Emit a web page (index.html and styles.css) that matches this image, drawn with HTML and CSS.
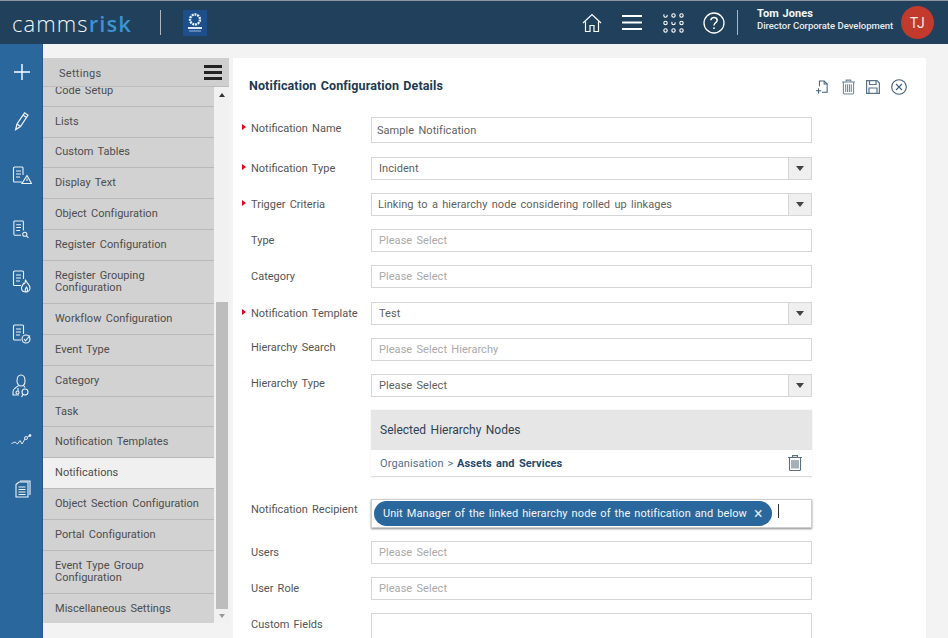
FILE: index.html
```html
<!DOCTYPE html>
<html lang="en">
<head>
<meta charset="utf-8">
<title>Notification Configuration Details</title>
<link rel="stylesheet" href="styles.css">
</head>
<body>
<div class="app">
  <header class="topbar">
    <div class="brand"><span class="brand-a">camms</span><span class="brand-b">risk</span></div>
    <span class="vline brand-line"></span>
    <div class="org-logo">
      <svg width="24" height="26" viewBox="0 0 24 26"><rect width="24" height="26" fill="#1c4f8c"/><circle cx="12" cy="9.5" r="5" fill="none" stroke="#e8f0f8" stroke-width="2.4" stroke-dasharray="2 .8"/><rect x="5" y="17" width="14" height="2" fill="#dfe9f4"/><rect x="6" y="20.5" width="12" height="1" fill="#9db8d6"/></svg>
    </div>
    <div class="top-spacer"></div>
    <nav class="top-icons">
      <svg class="ti-home" width="20" height="20" viewBox="0 0 20 20" fill="none" stroke="#fff" stroke-width="1.2"><path d="M1 10 10 1.5 19 10"/><path d="M3.5 8.5V18.5H8V12.5H12V18.5H16.5V8.5"/></svg>
      <svg class="ti-menu" width="20" height="15" viewBox="0 0 20 15" fill="#fff"><rect width="20" height="2"/><rect y="6.5" width="20" height="2"/><rect y="13" width="20" height="2"/></svg>
      <svg class="ti-grid" width="21" height="20" viewBox="0 0 21 20" fill="none" stroke="#fff" stroke-width="1.1"><circle cx="2.5" cy="2.5" r="1.7" stroke-dasharray="6 3"/><circle cx="10.5" cy="2.5" r="1.7"/><circle cx="18.5" cy="2.5" r="1.7"/><circle cx="2.5" cy="10" r="1.7"/><circle cx="10.5" cy="10" r="1.7" stroke-dasharray="6 3"/><circle cx="18.5" cy="10" r="1.7"/><circle cx="2.5" cy="17.5" r="1.7"/><circle cx="10.5" cy="17.5" r="1.7"/><circle cx="18.5" cy="17.5" r="1.7"/></svg>
      <svg class="ti-help" width="22" height="22" viewBox="0 0 22 22" fill="none" stroke="#fff" stroke-width="1.3"><circle cx="11" cy="11" r="10"/><path d="M7.8 8.3C8 6.3 9.4 5.4 11 5.4c1.8 0 3.2 1.2 3.2 2.8 0 2.4-3.2 2.6-3.2 5.2" stroke-width="1.5"/><circle cx="11" cy="16.2" r=".9" fill="#fff" stroke="none"/></svg>
    </nav>
    <span class="vline user-line"></span>
    <div class="user">
      <div class="user-name">Tom Jones</div>
      <div class="user-role">Director Corporate Development</div>
    </div>
    <div class="avatar">TJ</div>
  </header>

  <div class="workspace">
    <aside class="rail">
      <svg class="r-plus" width="16" height="16" viewBox="0 0 16 16" stroke="#fff" stroke-width="1.4"><path d="M8 0V16M0 8H16"/></svg>
      <svg class="r-pen" width="16" height="20" viewBox="0 0 16 20" fill="none" stroke="#eef3f8" stroke-width="1.2"><path d="M4 13 11.5 1.8 15 4.2 7.5 15.5 2.6 18.6Z"/><path d="M4 13 7.5 15.5M10 4 13.5 6.4"/></svg>
      <svg class="r-doc" width="20" height="19" viewBox="0 0 20 19" fill="none" stroke="#eef3f8" stroke-width="1.1"><path d="M10 16H2.500A1 1 0 0 1 1.500 15V2A1 1 0 0 1 2.500 1H10A1 1 0 0 1 11 2V9"/><path d="M4 5H9M4 8H9M4 11H8"/><path d="M15 9.500 19.500 17.500H10Z"/><path d="M15 12.500V15"/></svg>
      <svg class="r-doc" width="18" height="19" viewBox="0 0 18 20" fill="none" stroke="#eef3f8" stroke-width="1.1"><path d="M9 16H2.500A1 1 0 0 1 1.500 15V2A1 1 0 0 1 2.500 1H10.500A1 1 0 0 1 11.500 2V11"/><path d="M4 5H9M4 8H9M4 11H8"/><circle cx="13" cy="15" r="2.200"/><path d="M14.800 16.800 16.800 18.800"/></svg>
      <svg class="r-doc" width="19" height="23" viewBox="0 0 19 23" fill="none" stroke="#eef3f8" stroke-width="1.1"><path d="M9 15.500H2.500A1 1 0 0 1 1.500 14.500V2A1 1 0 0 1 2.500 1H10.500A1 1 0 0 1 11.500 2V9"/><path d="M4 5H9M4 8H9M4 11H8"/><path d="M13.500 9.500C14 13 18 14 18 18 18 20.500 16 22 14 22 11.500 22 9.500 20.500 9.500 18 9.500 16 11 15 11.500 13.500 12.500 14.500 13.500 12.500 13.500 9.500Z"/><path d="M13.500 22C12.500 20 13.500 18.500 14.500 17 15.500 18.500 16 20.500 14.500 22"/></svg>
      <svg class="r-doc" width="19" height="20" viewBox="0 0 19 20" fill="none" stroke="#eef3f8" stroke-width="1.1"><path d="M9 16H2.500A1 1 0 0 1 1.500 15V2A1 1 0 0 1 2.500 1H10.500A1 1 0 0 1 11.500 2V10"/><path d="M4 5H9M4 8H9M4 11H8"/><circle cx="14" cy="15" r="4"/><path d="M12 15 13.500 16.800 18 11.500"/></svg>
      <svg class="r-doc" width="18" height="24" viewBox="0 0 18 24" fill="none" stroke="#eef3f8" stroke-width="1.1"><path d="M5 7C5 3 6.500 1 9 1S13 3 13 7 11 12 9 12 5 10 5 7Z"/><path d="M6.500 11.500C5.500 13 1 14 1 18V21H7"/><path d="M11.500 11.500 13 13.500"/><path d="M6 14V17"/><circle cx="5.500" cy="18.500" r="1.500"/><circle cx="13" cy="18" r="3"/><path d="M11 20.500 9.500 23"/></svg>
      <svg class="r-trend" width="21" height="12" viewBox="0 0 20 12" fill="none" stroke="#eef3f8" stroke-width=".9"><path d="M0 9.500 3.500 8 6 10 8.500 6.500 10.500 10 13.500 5"/><circle cx="14.500" cy="4" r="1.500"/><circle cx="18.500" cy="1.500" r="1" fill="#eef3f8"/><path d="M15.800 3.200 17.500 2"/></svg>
      <svg class="r-pages" width="16" height="18" viewBox="0 0 16 18" fill="none" stroke="#eef3f8" stroke-width="1.1"><path d="M5 1H15V15"/><path d="M1 4.500 4 2H13V17H1Z"/><path d="M3.500 7H10.500M3.500 9.500H10.500M3.500 12H10.500M3.500 14.500H10.500"/></svg>
    </aside>

    <section class="settings">
      <div class="settings-head">
        <span class="settings-title">Settings</span>
        <svg width="18" height="15" viewBox="0 0 18 15" fill="#222"><rect width="18" height="3"/><rect y="6" width="18" height="3"/><rect y="12" width="18" height="3"/></svg>
      </div>
      <div class="settings-body">
        <ul class="settings-list">
          <li class="item first">Code Setup</li>
          <li class="item">Lists</li>
          <li class="item">Custom Tables</li>
          <li class="item">Display Text</li>
          <li class="item">Object Configuration</li>
          <li class="item">Register Configuration</li>
          <li class="item double">Register Grouping Configuration</li>
          <li class="item">Workflow Configuration</li>
          <li class="item">Event Type</li>
          <li class="item">Category</li>
          <li class="item">Task</li>
          <li class="item">Notification Templates</li>
          <li class="item active">Notifications</li>
          <li class="item">Object Section Configuration</li>
          <li class="item">Portal Configuration</li>
          <li class="item double">Event Type Group Configuration</li>
          <li class="item">Miscellaneous Settings</li>
        </ul>
        <div class="scrollbar">
          <span class="arrow-up"></span>
          <span class="thumb"></span>
          <span class="arrow-down"></span>
        </div>
      </div>
    </section>

    <main class="panel">
      <div class="panel-head">
        <h1>Notification Configuration Details</h1>
        <div class="actions">
          <svg class="act-file" width="12" height="14" viewBox="0 0 14 16" fill="none" stroke="#3f5f7c" stroke-width="1.200"><path d="M4 7V1H9.500L13 4.500V14H7"/><path d="M9.500 1V4.500H13"/><path d="M0 12.500H6M3 9.500V15.500"/></svg>
          <svg width="13" height="16" viewBox="0 0 14 16" fill="none" stroke="#6d8599" stroke-width="1.100"><path d="M0 2.500H14M4.500 2.500V.6H9.500V2.500"/><path d="M1.500 2.500V14.500A1 1 0 0 0 2.500 15.500H11.500A1 1 0 0 0 12.500 14.500V2.500"/><path d="M4 5V13.500M6 5V13.500M8 5V13.500M10 5V13.500"/></svg>
          <svg width="14" height="14" viewBox="0 0 14 14" fill="none" stroke="#58748c" stroke-width="1.200"><path d="M.6.6H11L13.400 3V13.400H.6Z"/><path d="M3.500.6V4.500H10V.6"/><path d="M3 13.400V8H11V13.400"/></svg>
          <svg width="16" height="16" viewBox="0 0 16 16" fill="none" stroke="#3f5f7c" stroke-width="1.100"><circle cx="8" cy="8" r="7.300"/><path d="M5 5 11 11M11 5 5 11"/></svg>
        </div>
      </div>

      <form class="form">
        <div class="row r-first">
          <label class="req">Notification Name</label>
          <div class="control text-value">Sample Notification</div>
        </div>
        <div class="row">
          <label class="req">Notification Type</label>
          <div class="control select">Incident<span class="caret"></span></div>
        </div>
        <div class="row">
          <label class="req">Trigger Criteria</label>
          <div class="control select criteria">Linking to a hierarchy node considering rolled up linkages<span class="caret"></span></div>
        </div>
        <div class="row">
          <label>Type</label>
          <div class="control placeholder">Please Select</div>
        </div>
        <div class="row r-gap">
          <label>Category</label>
          <div class="control placeholder">Please Select</div>
        </div>
        <div class="row">
          <label class="req">Notification Template</label>
          <div class="control select">Test<span class="caret"></span></div>
        </div>
        <div class="row r-up">
          <label>Hierarchy Search</label>
          <div class="control placeholder">Please Select Hierarchy</div>
        </div>
        <div class="row r-up">
          <label>Hierarchy Type</label>
          <div class="control select">Please Select<span class="caret"></span></div>
        </div>
        <div class="nodes">
          <div class="nodes-head">Selected Hierarchy Nodes</div>
          <div class="nodes-row">
            <span class="crumb">Organisation &gt; <b>Assets and Services</b></span>
            <svg width="14" height="16" viewBox="0 0 14 16" fill="none" stroke="#5d6f7e" stroke-width="1.100"><path d="M0 2.500H14M4.500 2.500V.6H9.500V2.500"/><path d="M1.500 2.500V14.500A1 1 0 0 0 2.500 15.500H11.500A1 1 0 0 0 12.500 14.500V2.500"/><path d="M4 5V13.500M6 5V13.500M8 5V13.500M10 5V13.500"/></svg>
          </div>
        </div>
        <div class="row r-recipient">
          <label>Notification Recipient</label>
          <div class="control tags"><span class="tag">Unit Manager of the linked hierarchy node of the notification and below<span class="tag-x">×</span></span><span class="cursor"></span></div>
        </div>
        <div class="row">
          <label>Users</label>
          <div class="control placeholder">Please Select</div>
        </div>
        <div class="row">
          <label>User Role</label>
          <div class="control placeholder">Please Select</div>
        </div>
        <div class="row">
          <label>Custom Fields</label>
          <div class="control tall"></div>
        </div>
      </form>
    </main>
  </div>
</div>
</body>
</html>
```
FILE: styles.css
```css
* { box-sizing: border-box; }
html, body { margin: 0; height: 100%; overflow: hidden; }
body { font-family: Roboto, "Liberation Sans", sans-serif; font-size: 11px; color: #555; background: #f3f3f3; }
.app { width: 948px; height: 638px; display: flex; flex-direction: column; overflow: hidden; }

.topbar { height: 44px; flex: none; display: flex; align-items: center; background: #20405b; border-top: 1px solid #8a96a0; color: #fff; }
.brand { margin-left: 12px; font-family: "Open Sans", sans-serif; font-size: 22px; letter-spacing: 1.1px; line-height: 30px; width: 121px; white-space: nowrap; }
.brand-a { font-weight: 300; color: #f2f5f8; }
.brand-b { font-weight: 600; color: #3b93d3; }
.vline { width: 1px; height: 25px; background: #aab6c0; flex: none; }
.brand-line { margin-left: 27px; }
.org-logo { margin-left: 22px; height: 26px; }
.org-logo svg, .top-icons svg, .actions svg, .nodes-row svg, .rail svg { display: block; }
.top-spacer { flex: 1; }
.top-icons { display: flex; align-items: center; }
.ti-menu { margin-left: 20px; }
.ti-grid { margin-left: 21px; }
.ti-help { margin-left: 19px; }
.user-line { margin-left: 12px; }
.user { margin-left: 19px; margin-bottom: 6px; width: 144px; white-space: nowrap; }
.user-name { font-size: 11px; font-weight: 700; line-height: 13px; letter-spacing: .05px; word-spacing: 1px; color: #f4f6f8; }
.user-role { font-size: 9.5px; font-weight: 500; line-height: 12px; color: #e6ebf0; letter-spacing: -.03px; word-spacing: .2px; }
.avatar { width: 33px; height: 33px; margin-right: 14px; border-radius: 50%; background: #c13a2c; color: #f6e9e4; font-size: 14px; display: flex; align-items: center; justify-content: center; letter-spacing: .5px; }

.workspace { flex: 1; min-height: 0; display: flex; align-items: stretch; }
.rail { width: 43px; flex: none; background: #2a679d; border-right: 1px solid #25598a; display: flex; flex-direction: column; align-items: center; }
.r-plus { margin-top: 20px; margin-left: 1px; }
.r-pen { margin-top: 31px; margin-left: 0; }
.rail .r-doc:nth-child(3) { margin-top: 35px; margin-left: 1px; }
.rail .r-doc:nth-child(4) { margin-top: 35px; }
.rail .r-doc:nth-child(5) { margin-top: 31px; margin-left: 1px; }
.rail .r-doc:nth-child(6) { margin-top: 31px; margin-left: 1px; }
.rail .r-doc:nth-child(7) { margin-top: 30px; margin-left: 0; }
.r-trend { margin-top: 36px; }
.r-pages { margin-top: 34px; margin-left: 3px; }

.settings { width: 186px; flex: none; margin-top: 14px; margin-bottom: 15px; display: flex; flex-direction: column; overflow: hidden; }
.settings-head { height: 29px; flex: none; background: #cfcfcf; border-bottom: 1px solid #bdbdbd; display: flex; align-items: center; justify-content: space-between; padding: 0 7px 0 16px; }
.settings-title { color: #4a4f55; letter-spacing: .3px; font-size: 11px; padding-top: 2px; }
.settings-body { flex: 1; min-height: 0; display: flex; overflow: hidden; }
.settings-list { list-style: none; margin: -11px 0 0; padding: 0; width: 171px; flex: none; }
.item { display: flex; align-items: center; min-height: 30.8px; padding: 0 12px; background: #d2d2d2; border-bottom: 1px solid #b9b9b9; color: #4d4d4d; font-size: 11px; line-height: 12px; letter-spacing: .03px; word-spacing: 1.5px; }
.item.double { min-height: 43.5px; }
.item.active { background: #f0f0f0; }
.scrollbar { flex: 1; position: relative; background: #f1f1f1; display: flex; flex-direction: column; align-items: center; }
.arrow-up { margin-top: 6px; width: 0; height: 0; border: 3px solid transparent; border-top: 0; border-bottom: 4px solid #333; }
.thumb { width: 12px; margin-top: 205px; height: 307px; background: #bdbdbd; flex: none; }
.arrow-down { margin-top: 5px; width: 0; height: 0; border: 3px solid transparent; border-bottom: 0; border-top: 4px solid #999; }

.panel { width: 693px; flex: none; margin: 14px 0 0 4px; background: #fff; overflow: hidden; }
.panel-head { display: flex; align-items: center; justify-content: space-between; height: 30px; margin-top: 12px; padding: 0 19px 0 16px; }
h1 { margin: 0; font-size: 12.5px; font-weight: 700; color: #203a52; letter-spacing: .12px; word-spacing: 1px; }
.actions { display: flex; align-items: center; gap: 11px; padding-top: 3px; }
.act-file { margin-right: 3px; }

.form { padding-top: 17px; }
.row { display: flex; align-items: flex-start; margin-bottom: 13px; }
.row label { width: 138px; flex: none; padding-left: 18px; padding-top: 5px; position: relative; color: #555; font-size: 11px; line-height: 14px; letter-spacing: 0; word-spacing: 1.5px; white-space: nowrap; }
.r-up label { padding-top: 3px; }
.req::before { content: ""; position: absolute; left: 9px; top: 7px; width: 0; height: 0; border-left: 4px solid #e8001c; border-top: 3.5px solid transparent; border-bottom: 3.5px solid transparent; }
.control { width: 441px; height: 23px; flex: none; border: 1px solid #d6d6d6; background: #fff; display: flex; align-items: center; padding: 0 7px; font-size: 11px; letter-spacing: .05px; word-spacing: 1.5px; color: #5f5f5f; position: relative; white-space: nowrap; }
.text-value { height: 26px; padding-left: 5px; }
.criteria { padding-left: 6px; }
.tall { height: 40px; }
.r-first { margin-bottom: 14px; }
.r-gap { margin-bottom: 14px; }
.caret { position: absolute; right: 0; top: 0; bottom: 0; width: 23px; background: #efefef; border-left: 1px solid #d6d6d6; }
.caret::after { content: ""; position: absolute; left: 7px; top: 8px; border-left: 4px solid transparent; border-right: 4px solid transparent; border-top: 5px solid #444; }
.placeholder { color: #aaa; }
.nodes { width: 441px; margin: 0 0 22px 138px; background: #fff; border-bottom: 1px solid #dcdcdc; box-shadow: 0 0 1px #ddd; }
.nodes-head { height: 40px; background: #e6e6e6; display: flex; align-items: center; padding-left: 9px; color: #2f4254; font-size: 12px; font-weight: 400; word-spacing: 1.5px; }
.nodes-row { height: 26px; display: flex; align-items: center; justify-content: space-between; padding: 0 10px 0 9px; }
.crumb { color: #52708a; letter-spacing: .1px; word-spacing: 1px; }
.crumb b { color: #23496b; letter-spacing: .1px; word-spacing: 1.5px; }
.r-recipient label { padding-top: 4px; }
.tags { height: 29px; padding: 0 1px; border: 1px solid #cfcfcf; box-shadow: 0 1px 2px #888; }
.tag { height: 25px; border-radius: 13px; margin-left: 1px; background: #2a679d; color: #f2f6fa; display: inline-flex; align-items: center; padding: 0 8px 0 9px; font-size: 11px; letter-spacing: .08px; word-spacing: 1.2px; }
.tag-x { margin-left: 7px; font-size: 16px; line-height: 16px; color: #dce7f1; width: 10px; }
.cursor { width: 1px; height: 14px; background: #333; margin-left: 6px; margin-top: -5px; }
```
